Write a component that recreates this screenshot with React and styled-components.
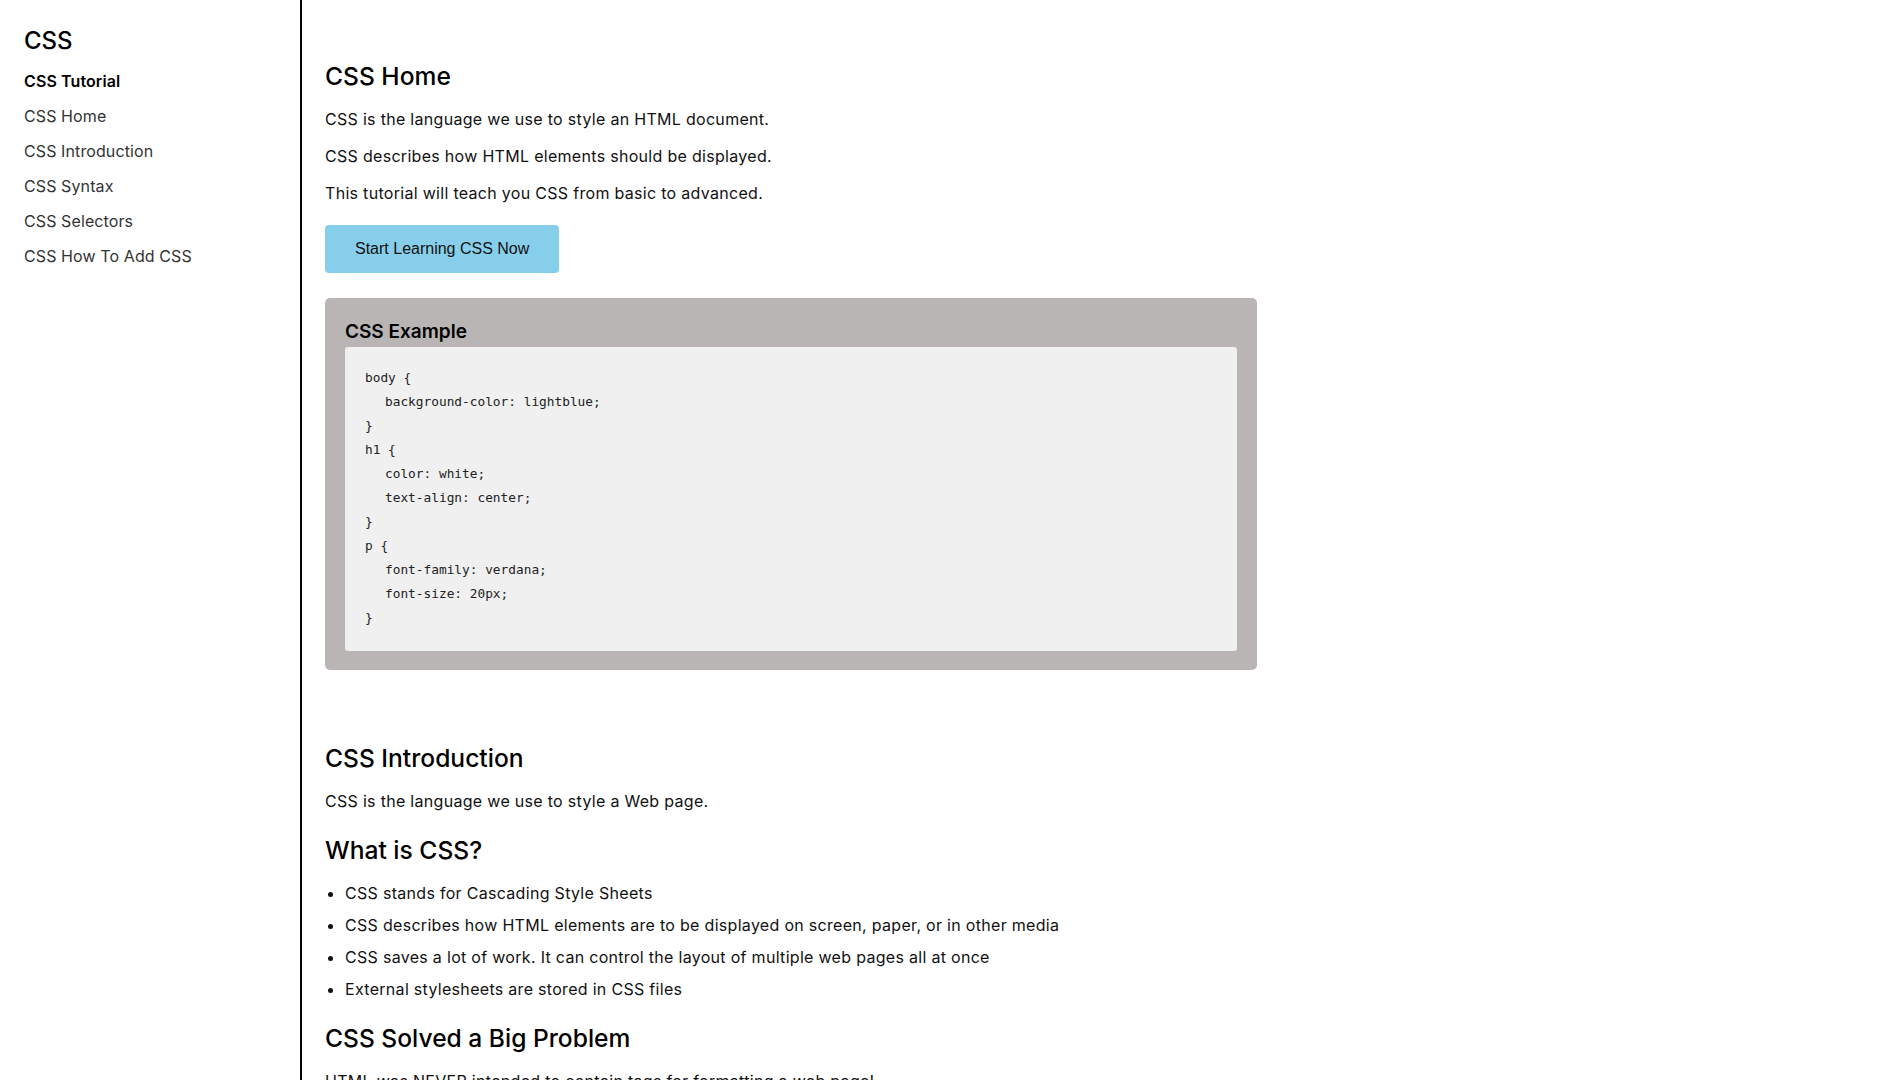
import React from 'react'
import styled, { createGlobalStyle } from 'styled-components'

const GlobalStyle = createGlobalStyle`
    html, body {
        margin: 0;
        padding: 0;
        background: #fff;
    }
    body {
        font-family: Inter, "Noto Sans", Arial, sans-serif;
        color: #111;
    }
`;

const sidebarLinks = [
    'CSS Home',
    'CSS Introduction',
    'CSS Syntax',
    'CSS Selectors',
    'CSS How To Add CSS',
];

const codeLines = [
    { text: 'body {', indent: false },
    { text: 'background-color: lightblue;', indent: true },
    { text: '}', indent: false },
    { text: 'h1 {', indent: false },
    { text: 'color: white;', indent: true },
    { text: 'text-align: center;', indent: true },
    { text: '}', indent: false },
    { text: 'p {', indent: false },
    { text: 'font-family: verdana;', indent: true },
    { text: 'font-size: 20px;', indent: true },
    { text: '}', indent: false },
];

const cssFacts = [
    'CSS stands for Cascading Style Sheets',
    'CSS describes how HTML elements are to be displayed on screen, paper, or in other media',
    'CSS saves a lot of work. It can control the layout of multiple web pages all at once',
    'External stylesheets are stored in CSS files',
];

export default function App() {
    return (
        <>
            <GlobalStyle />
            <Layout>
                <Sidebar>
                    <SidebarTitle>CSS</SidebarTitle>
                    <NavList>
                        <NavItem $active>CSS Tutorial</NavItem>
                        {sidebarLinks.map((link) => (
                            <NavItem key={link}>{link}</NavItem>
                        ))}
                    </NavList>
                </Sidebar>

                <Main>
                    <Section>
                        <Heading>CSS Home</Heading>
                        <Paragraph>CSS is the language we use to style an HTML document.</Paragraph>
                        <Paragraph>CSS describes how HTML elements should be displayed.</Paragraph>
                        <Paragraph>This tutorial will teach you CSS from basic to advanced.</Paragraph>
                        <StartButton>Start Learning CSS Now</StartButton>

                        <ExampleBox>
                            <ExampleTitle>CSS Example</ExampleTitle>
                            <CodeBlock>
                                {codeLines.map((line, i) => (
                                    <CodeLine key={i} $indent={line.indent}>{line.text}</CodeLine>
                                ))}
                            </CodeBlock>
                        </ExampleBox>
                    </Section>

                    <Section $spaced>
                        <Heading>CSS Introduction</Heading>
                        <Paragraph>CSS is the language we use to style a Web page.</Paragraph>

                        <Heading>What is CSS?</Heading>
                        <FactList>
                            {cssFacts.map((fact) => (
                                <FactItem key={fact}>{fact}</FactItem>
                            ))}
                        </FactList>

                        <Heading>CSS Solved a Big Problem</Heading>
                        <Paragraph>HTML was NEVER intended to contain tags for formatting a web page!</Paragraph>
                        <Paragraph>HTML was created to describe the content of a web page, like:</Paragraph>
                        <Paragraph>&lt;h1&gt;This is a heading&lt;/h1&gt;</Paragraph>
                        <Paragraph>&lt;p&gt;This is a paragraph.&lt;/p&gt;</Paragraph>
                    </Section>
                </Main>
            </Layout>
        </>
    )
}

const Layout = styled.div`
    display: flex;
    min-height: 100vh;
`;

const Sidebar = styled.aside`
    width: 302px;
    flex-shrink: 0;
    box-sizing: border-box;
    padding: 26px 24px;
    border-right: 2px solid #000;
`;

const SidebarTitle = styled.h2`
    margin: 0 0 13px 0;
    font-size: 24px;
    line-height: 30px;
    font-weight: 500;
    color: #000;
`;

const NavList = styled.nav`
    display: flex;
    flex-direction: column;
    gap: 11px;
`;

const NavItem = styled.a`
    display: block;
    font-size: 16px;
    line-height: 24px;
    letter-spacing: 0.1px;
    font-weight: ${(p) => (p.$active ? 600 : 400)};
    color: ${(p) => (p.$active ? '#000' : '#333')};
    text-decoration: none;
    cursor: pointer;
`;

const Main = styled.main`
    flex: 1;
    padding: 39px 23px 40px;
`;

const Section = styled.section`
    padding-top: ${(p) => (p.$spaced ? '51px' : '0')};
`;

const Heading = styled.h2`
    margin: 20px 0 14px 0;
    font-size: 24.6px;
    line-height: 34px;
    font-weight: 500;
    color: #000;
`;

const Paragraph = styled.p`
    margin: 0 0 13px 0;
    font-size: 16px;
    line-height: 24px;
    letter-spacing: 0.3px;
    color: #111;
`;

const StartButton = styled.button`
    display: block;
    margin-top: 20px;
    padding: 0 30px;
    height: 48px;
    border: none;
    border-radius: 4px;
    background-color: #87ceeb;
    color: #111;
    font-family: "Liberation Sans", Arial, sans-serif;
    font-size: 16px;
    cursor: pointer;
`;

const ExampleBox = styled.div`
    width: 932px;
    box-sizing: border-box;
    margin-top: 25px;
    padding: 20px 20px 19px;
    background-color: #bab5b5;
    border-radius: 5px;
`;

const ExampleTitle = styled.h3`
    margin: 0 0 1px 0;
    font-size: 19px;
    line-height: 28px;
    font-weight: 600;
    color: #000;
`;

const CodeBlock = styled.div`
    padding: 19px 20px 21px;
    background-color: #f0f0f0;
    border-radius: 3px;
    font-family: "DejaVu Sans Mono", "Liberation Mono", monospace;
    font-size: 12.8px;
    color: #222;
`;

const CodeLine = styled.div`
    line-height: 24px;
    padding-left: ${(p) => (p.$indent ? '20px' : '0')};
    white-space: pre;
`;

const FactList = styled.ul`
    margin: 14px 0 20px 0;
    padding-left: 20px;
`;

const FactItem = styled.li`
    margin: 0 0 8px 0;
    font-size: 16px;
    line-height: 24px;
    letter-spacing: 0.3px;
    color: #111;
`;
